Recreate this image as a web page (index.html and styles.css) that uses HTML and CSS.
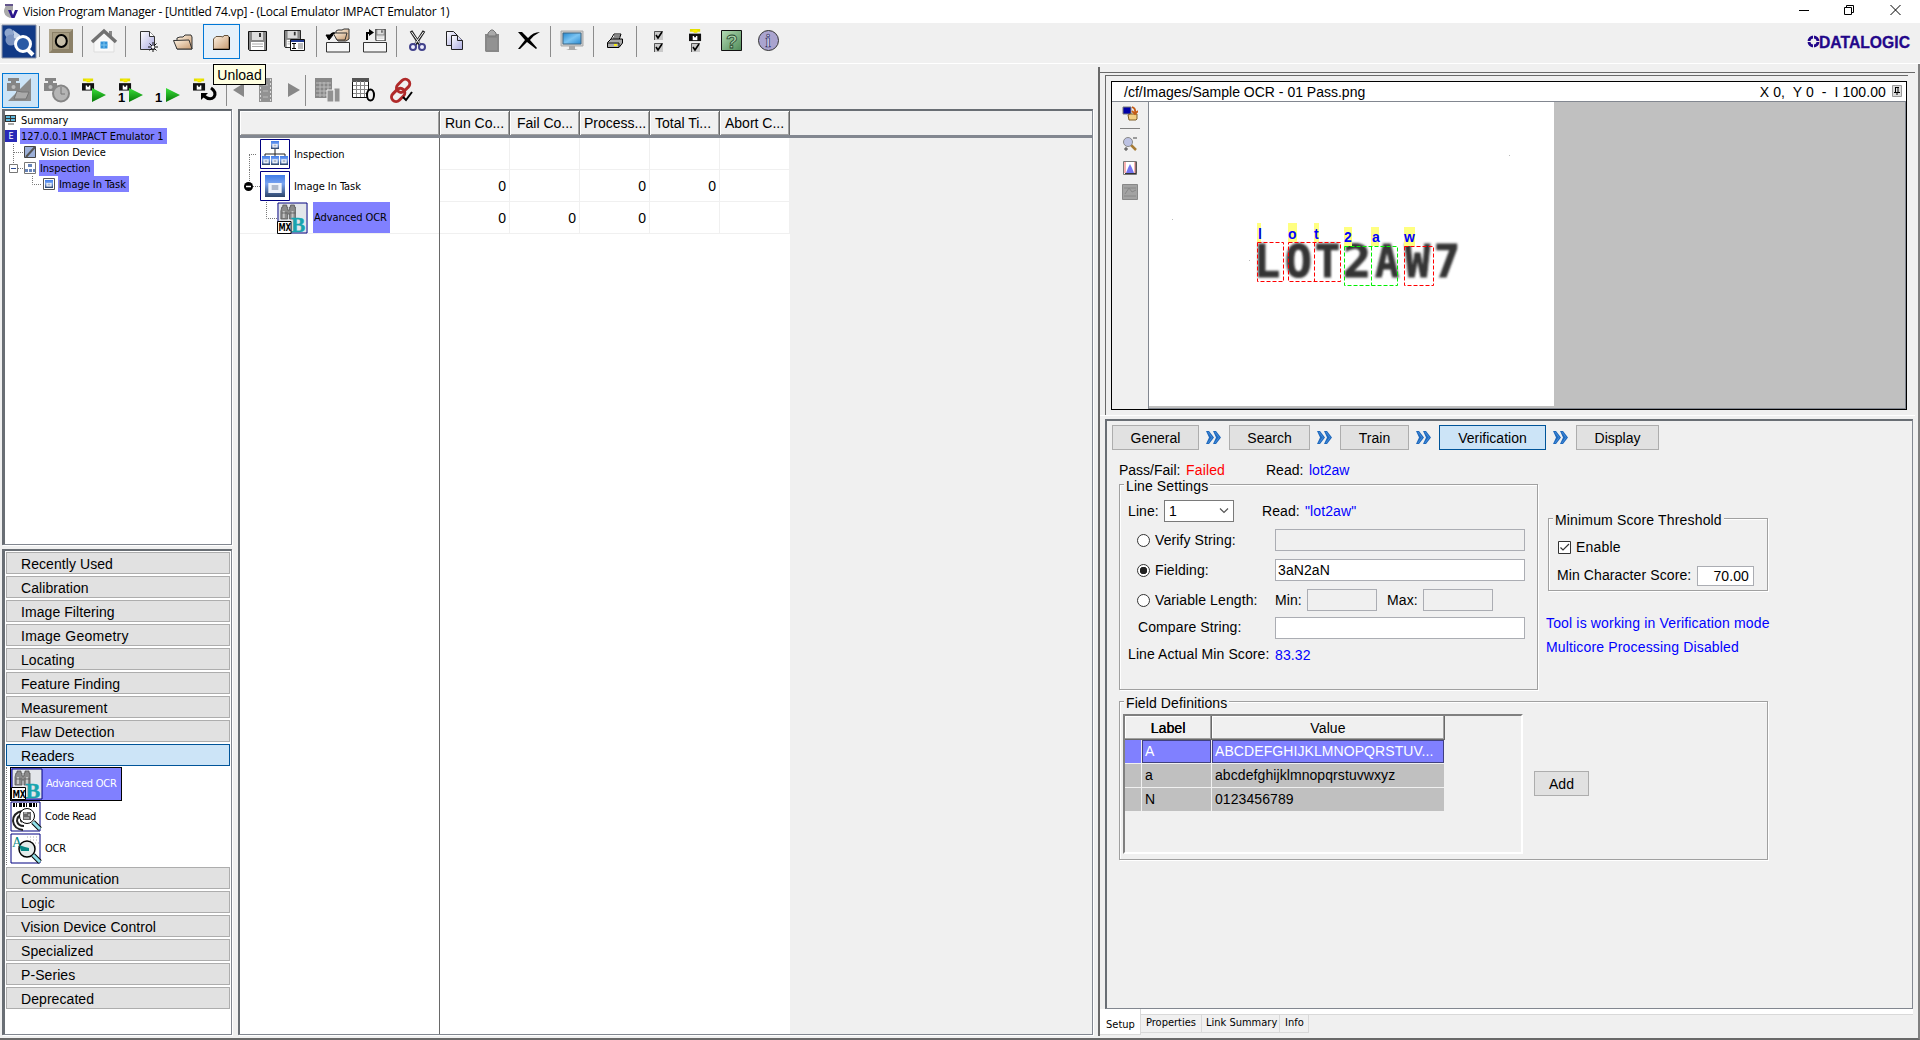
FILE: index.html
```html
<!DOCTYPE html>
<html lang="en">
<head>
<meta charset="utf-8">
<title>Vision Program Manager</title>
<link rel="stylesheet" href="styles.css">
</head>
<body>
<svg class="defs" width="0" height="0">
  <defs>
    <linearGradient id="lav" x1="0" y1="0" x2="1" y2="1"><stop offset="0" stop-color="#fff"/><stop offset="1" stop-color="#aaaae0"/></linearGradient>
    <linearGradient id="tan" x1="0" y1="0" x2="1" y2="1"><stop offset="0" stop-color="#fff4e4"/><stop offset="1" stop-color="#c79a70"/></linearGradient>
    <linearGradient id="blue" x1="0" y1="0" x2="0" y2="1"><stop offset="0" stop-color="#3f7be8"/><stop offset=".4" stop-color="#79a4f0"/><stop offset="1" stop-color="#2d4468"/></linearGradient>
    <linearGradient id="green" x1="0" y1="0" x2="0" y2="1"><stop offset="0" stop-color="#3ae03a"/><stop offset="1" stop-color="#087808"/></linearGradient>
    <linearGradient id="help" x1="0" y1="0" x2="1" y2="1"><stop offset="0" stop-color="#b5dcb5"/><stop offset="1" stop-color="#4f8a58"/></linearGradient>
    <linearGradient id="screen" x1="0" y1="0" x2="1" y2="1"><stop offset="0" stop-color="#2487cf"/><stop offset=".5" stop-color="#7cc4f2"/><stop offset="1" stop-color="#2a8ad2"/></linearGradient>
    <symbol id="floppy" viewBox="0 0 19 20"><path d="M.5 .5H18.5V19.5H1.5L.5 18.5Z" fill="#888" stroke="#111"/><path d="M4 1H15V9H4Z" fill="#ddd"/><path d="M11 2H13V6H11Z" fill="#333"/><path d="M3 11H16V19H3Z" fill="#fff"/><path d="M4 13H15M4 15.5H15" stroke="#aaa"/></symbol>
    <symbol id="camera" viewBox="0 0 14 14"><path d="M1 0H12V3H9V4H5V3H1Z" fill="#e3df00"/><path d="M4 1H9V3H4Z" fill="#fff000"/><path d="M0 5H13V13H0Z" fill="#111"/><path d="M4 7.5H9V12H4Z" fill="#fff"/><path d="M5.5 7H7.5V9H5.5Z" fill="#111"/></symbol>
    <symbol id="graycam" viewBox="0 0 14 14"><path d="M1 0H12V3H9V5H4V3H1ZM0 5H13V13H0Z" fill="#858585"/><circle cx="6.500" cy="9" r="2" fill="#bbb"/></symbol>
    <symbol id="play" viewBox="0 0 14 14"><path d="M0 0L14 7L0 14Z" fill="url(#green)"/></symbol>
    <symbol id="check" viewBox="0 0 9 9"><path d="M0 0H9V9H0Z" fill="#c9c9c9"/><path d="M.5 9V.5H9" fill="none" stroke="#555"/><path d="M2 4L4 7L8 1" fill="none" stroke="#000" stroke-width="1.600"/></symbol>
    <symbol id="window" viewBox="0 0 18 22" preserveAspectRatio="none"><path d="M0 0H18V22H0Z" fill="url(#blue)"/><path d="M3 8H15V18H3Z" fill="#eef3fb"/><path d="M6 10H12V15H6Z" fill="#aeb9cc"/></symbol>
    <symbol id="mx" viewBox="0 0 32 32" preserveAspectRatio="none">
      <path d="M1 1H31V31H1Z" fill="#e3e6ea" stroke="#000080"/>
      <path d="M5 5H6V3H10V5H11V8H13V5H14V3H18V5H19V17H13V12H11V17H4V9Z" fill="#8a8a8a" stroke="#555" stroke-width=".8"/><path d="M7 9V16M16 9V16" stroke="#c4c4c4" stroke-width="2"/><path d="M5 11H11M13 11H19" stroke="#555" stroke-width=".8"/>
      <text x="14.500" y="30" class="mx-b">B</text><path d="M.5 19.500H14.500V31.500H.5Z" fill="#fff" stroke="#000"/><text x="1.500" y="29.500" class="mx-t" textLength="13" lengthAdjust="spacingAndGlyphs">MX</text>
    </symbol>
    <symbol id="arrows" viewBox="0 0 15 13"><path d="M0 0H3L8 6.500L3 13H0L3 6.500ZM7 0H10L15 6.500L10 13H7L10 6.500Z" fill="#1f69bd"/><path d="M2 1L6 6.500L2 12M9 1L13 6.500L9 12" fill="none" stroke="#4e94df" stroke-width=".8"/></symbol>
  </defs>
</svg>

<header class="titlebar">
  <svg class="app-icon" width="16" height="16" viewBox="0 0 16 16"><path d="M4 1H11V6L9 9L11 13L8 14Q1 11 2 6Z" fill="#aaa"/><path d="M3 0H11V2H3Z" fill="#63558c"/><path d="M6 6H9L11 11L13 6H16L12.500 14H9.500Z" fill="#2b168c"/></svg>
  <h1>Vision Program Manager - [Untitled 74.vp] - (Local Emulator IMPACT Emulator 1)</h1>
  <svg class="window-controls" width="104" height="14" viewBox="0 0 104 14" fill="none" stroke="#000"><path d="M0 6.500H10M45.500 3.500H52.500V10.500H45.500ZM47.500 3.500V1.500H54.500V8.500H52.500M91.500 1L101.500 11M101.500 1L91.500 11"/></svg>
</header>

<nav class="toolbar">
  <button class="tool"><svg viewBox="0 0 37 35"><path d="M2 1H36V34H2Z" fill="#123a86" stroke="#8a93a8"/><circle cx="9" cy="9" r="4.500" fill="#8fa6cd"/><circle cx="11" cy="16" r="5.500" fill="#7b93c0"/><path d="M13 6L20 11V16L14 14Z" fill="#c6d3e8"/><circle cx="23" cy="20" r="7.500" fill="#2a5aa5" stroke="#fff" stroke-width="3"/><path d="M28 26L33 31" stroke="#fff" stroke-width="4"/></svg></button>
  <i class="sep"></i>
  <button class="tool"><svg viewBox="0 0 37 35"><path d="M6 5H30V29H6Z" fill="#8b8067"/><path d="M6 5H30L27 8H9V26L6 29Z" fill="#b0a68e"/><path d="M10 9H26V25H10Z" fill="#a79c82"/><ellipse cx="18.300" cy="17" rx="5.500" ry="6" fill="#c7bea9" stroke="#000" stroke-width="2"/></svg></button>
  <i class="sep"></i>
  <button class="tool"><svg viewBox="0 0 37 35"><path d="M8 17L18 9L28 17V28H8Z" fill="#f8f8f8" stroke="#ddd"/><path d="M23 7H26V12H23Z" fill="#888"/><path d="M6 18L18 7L30 18" fill="none" stroke="#727272" stroke-width="3.500"/><path d="M14 17H22V25H14Z" fill="#3593d8" stroke="#fff"/><path d="M18 17V25M14 21H22" stroke="#7cc5ef"/></svg></button>
  <i class="sep"></i>
  <button class="tool"><svg viewBox="0 0 37 35"><path d="M11.500 7.500H20.500L25.500 12.500V25.500H11.500Z" fill="url(#lav)" stroke="#333"/><path d="M20.500 7.500V12.500H25.500" fill="#fff" stroke="#333"/><path d="M24 18V28M19 23H29M20.500 19.500L27.500 26.500M27.500 19.500L20.500 26.500" stroke="#111"/><circle cx="24" cy="23" r="1.500" fill="#fff"/></svg></button>
  <button class="tool"><svg viewBox="0 0 37 35"><path d="M11 25V14L14 13H17L19 11H25L26 13V25Z" fill="url(#tan)" stroke="#333"/><path d="M7.500 16.500L11 25H26L23 16Z" fill="url(#tan)" stroke="#333"/></svg></button>
  <button class="tool hot"><svg viewBox="0 0 37 35"><path d="M10.500 25V15L13 12.500H18L20 13L21 11.500H25L26 13V25Z" fill="url(#tan)" stroke="#65533d"/><path d="M26.500 13V25.500H10" fill="none" stroke="#000"/></svg></button>
  <button class="tool"><svg viewBox="0 0 37 35"><use href="#floppy" x="8" y="7" width="19" height="20"/></svg></button>
  <button class="tool"><svg viewBox="0 0 37 35"><use href="#floppy" x="7" y="6" width="17" height="18"/><path d="M13.500 15.500H27.500V26.500H13.500Z" fill="#fff" stroke="#111"/><path d="M14 16H27V18H14Z" fill="#223a91"/><path d="M15 19.500H19M15 24.500H19M17 19.500V24.500" stroke="#000"/><path d="M21 19H26V25H21Z" fill="#bbb"/></svg></button>
  <i class="sep"></i>
  <button class="tool"><svg viewBox="0 0 37 35"><path d="M16 14V7L18 6H22L24 5H29V15L26 17H18Z" fill="url(#tan)" stroke="#333"/><path d="M13 9H27L25 16H17Z" fill="url(#tan)" stroke="#333"/><path d="M15 9Q10 8 10 13M6 11L9 16L13 11Z" fill="#000" stroke="#000"/><path d="M6.500 18.500H29.500V28H6.500Z" fill="#f6f6f6" stroke="#333"/></svg></button>
  <button class="tool"><svg viewBox="0 0 37 35"><use href="#floppy" x="18" y="5" width="11" height="12"/><path d="M10 16V9H13" fill="none" stroke="#000" stroke-width="2"/><path d="M12 5L17 8.500L12 12Z"/><path d="M6.500 18.500H29.500V28H6.500Z" fill="#f6f6f6" stroke="#333"/></svg></button>
  <i class="sep"></i>
  <button class="tool"><svg viewBox="0 0 37 35"><path d="M11 7L20 21M24 7L15 21" stroke="#222" stroke-width="3"/><path d="M11.500 8L20 20M23.500 8L15 20" stroke="#fff"/><g fill="#eef" stroke="#42428c" stroke-width="2"><circle cx="13" cy="23" r="3"/><circle cx="22" cy="23" r="3"/></g></svg></button>
  <button class="tool"><svg viewBox="0 0 37 35"><g fill="url(#lav)" stroke="#222"><path d="M9.500 7.500H16.500L20.500 11.500V21.500H9.500Z"/><path d="M14.500 11.500H20.500L25.500 16.500V25.500H14.500Z"/><path d="M20.500 11.500V16.500H25.500"/></g></svg></button>
  <button class="tool"><svg viewBox="0 0 37 35"><path d="M11 10H25V28H12L11 27Z" fill="#888"/><path d="M14 12V9L17 6H19L22 9V12Z" fill="#aaa" stroke="#777"/><path d="M13 14H23V26H13Z" fill="#929292"/></svg></button>
  <button class="tool"><svg viewBox="0 0 37 35"><path d="M7 8L11 8L17 14Q22 8 29 8Q23 11 19 16L26 24L25 25L16 18L9 25H7L14 16Z"/></svg></button>
  <i class="sep"></i>
  <button class="tool"><svg viewBox="0 0 37 35"><path d="M7 7H29V22H7Z" fill="#ccc" stroke="#aaa"/><path d="M9 9H27V20H9Z" fill="url(#screen)" stroke="#3f6684"/><path d="M15 22H21V25L24 26H12L15 25Z" fill="#aaa"/></svg></button>
  <i class="sep"></i>
  <button class="tool"><svg viewBox="0 0 37 35"><path d="M14 15L17 10H24L22 16" fill="#fff" stroke="#000"/><path d="M10.500 18.500L14 15H25.500V19L22 23.500H10.500Z" fill="#aaa" stroke="#000"/><path d="M11 19H22V23M17 12H23M16 14H22" fill="none" stroke="#111"/><path d="M17 20H20V22H17Z" fill="#f4ea12"/></svg></button>
  <i class="sep"></i>
  <button class="tool"><svg viewBox="0 0 37 35"><use href="#check" x="14" y="7" width="9" height="9"/><use href="#check" x="14" y="19" width="9" height="9"/></svg></button>
  <button class="tool"><svg viewBox="0 0 37 35"><use href="#camera" x="12" y="5" width="13" height="13"/><use href="#check" x="14" y="19" width="9" height="9"/></svg></button>
  <button class="tool"><svg viewBox="0 0 37 35"><path d="M7.500 6.500H27.500V26.500H7.500Z" fill="url(#help)" stroke="#111"/><text x="12" y="23.500" class="help-mark">?</text></svg></button>
  <button class="tool"><svg viewBox="0 0 37 35"><circle cx="17.500" cy="16.500" r="10" fill="#aaa4cf" stroke="#333"/><text x="14.500" y="23" class="info-mark">i</text></svg></button>
  <div class="brand"><svg width="104" height="16" viewBox="0 0 104 16"><circle cx="6.500" cy="7.500" r="4.500" fill="none" stroke="#23078a" stroke-width="3"/><path d="M6.500 1V14M0 7.500H13" stroke="#f0f0f0" stroke-width="1"/><text x="12" y="13.500" textLength="91" lengthAdjust="spacingAndGlyphs">DATALOGIC</text></svg></div>
</nav>

<main class="workspace">
  <section class="left">
    <nav class="runbar">
      <button class="tool pressed"><svg viewBox="0 0 37 35"><use href="#graycam" x="5" y="5" width="14" height="14"/><path d="M29 5V28H6Z" fill="#8b8b8b"/><path d="M12 26L15 18L20 19H27L24 26Z" fill="#aaa" stroke="#747474"/></svg></button>
      <button class="tool"><svg viewBox="0 0 37 35"><use href="#graycam" x="5" y="5" width="14" height="14"/><circle cx="22" cy="20.500" r="8" fill="#b5b5b5" stroke="#858585" stroke-width="2"/><path d="M22 14V21H26" fill="none" stroke="#777"/></svg></button>
      <button class="tool"><svg viewBox="0 0 37 35"><use href="#camera" x="6" y="5" width="13" height="14"/><use href="#play" x="16" y="15" width="14" height="14"/></svg></button>
      <button class="tool"><svg viewBox="0 0 37 35"><use href="#camera" x="6" y="5" width="13" height="14"/><text x="5" y="29" class="one">1</text><use href="#play" x="16" y="15" width="14" height="14"/></svg></button>
      <button class="tool"><svg viewBox="0 0 37 35"><text x="5" y="29" class="one">1</text><use href="#play" x="16" y="15" width="14" height="14"/></svg></button>
      <button class="tool"><svg viewBox="0 0 37 35"><use href="#camera" x="6" y="5" width="13" height="14"/><path d="M24 15Q30 19 27 24Q23 28 17 23" fill="none" stroke="#000" stroke-width="3"/><path d="M14 20H21L14 27Z"/></svg></button>
      <i class="sep"></i>
      <button class="tool step"><svg viewBox="0 0 18 35"><path d="M3 17L14 10V24Z" fill="#888"/></svg></button>
      <button class="tool"><svg viewBox="0 0 37 35"><path d="M11 5H24V29H11Z" fill="#929292"/><path d="M12.500 6V29M22.500 6V29" stroke="#ddd" stroke-dasharray="2 2"/><path d="M15 12H20M15 18H20M15 24H20" stroke="#bbb"/></svg></button>
      <button class="tool step"><svg viewBox="0 0 18 35"><path d="M3 10L15 17L3 24Z" fill="#888"/></svg></button>
      <i class="sep"></i>
      <button class="tool"><svg viewBox="0 0 37 35"><path d="M6 5H23V25H6Z" fill="#888"/><path d="M7 10H22M7 14H22M7 18H22M7 22H22M11 9V24M15 9V24M19 9V24" stroke="#bbb"/><path d="M18 17H25V29H18ZM25 15H31V29H25Z" fill="#929292" stroke="#eee"/></svg></button>
      <button class="tool"><svg viewBox="0 0 37 35"><path d="M6.500 5.500H22.500V24.500H6.500Z" fill="#fff" stroke="#111"/><path d="M6 5H23V9H6Z" fill="#555"/><path d="M7 12.500H22M7 16.500H22M7 20.500H22M10.500 8V24M14.500 8V24M18.500 8V24" stroke="#888"/><ellipse cx="24.500" cy="22" rx="3.500" ry="5.500" fill="#f0f0f0" stroke="#000" stroke-width="2"/></svg></button>
      <button class="tool"><svg viewBox="0 0 37 35"><g fill="none" stroke="#b02a2a" stroke-width="3" transform="rotate(-45 18 17)"><rect x="15" y="11" width="15" height="9" rx="4.500"/><rect x="5" y="14" width="15" height="9" rx="4.500"/></g><path d="M20 24L23 27L29 19" fill="none" stroke="#000" stroke-width="2"/></svg></button>
    </nav>
    <div class="panes">
      <div class="side">
        <div class="tree">
          <div class="tree-row"><svg width="12" height="12" viewBox="0 0 12 12"><path d="M0 1H11V8H0Z" fill="#333"/><path d="M1 2H5V4H1ZM6 2H10V4H6ZM1 5H5V7H1ZM6 5H10V7H6Z" fill="#5db8dd"/><path d="M3 10H9" stroke="#555"/></svg><span>Summary</span></div>
          <div class="tree-row"><svg width="12" height="12" viewBox="0 0 12 12"><path d="M0 0H12V12H0Z" fill="#2929b8"/><text x="3.500" y="9" class="e-mark">E</text></svg><span class="sel">127.0.0.1 IMPACT Emulator 1</span></div>
          <div class="tree-row d1"><svg width="32" height="16" viewBox="0 0 32 16"><path d="M8.500 0V16M9 8.500H18" stroke="#777" stroke-dasharray="1 1"/><path d="M19.500 2.500H30.500V13.500H19.500Z" fill="#9cb0d8" stroke="#444"/><path d="M21 13L30 3" stroke="#555" stroke-width="2"/></svg><span>Vision Device</span></div>
          <div class="tree-row d1"><svg width="32" height="16" viewBox="0 0 32 16"><path d="M8.500 0V4M13 8.500H18" stroke="#777" stroke-dasharray="1 1"/><path d="M4.500 4.500H12.500V12.500H4.500Z" fill="#fff" stroke="#777"/><path d="M6 8.500H11" stroke="#2c4a92"/><path d="M19.500 2.500H30.500V13.500H19.500Z" fill="#fff" stroke="#777"/><path d="M23 4H27V7H23ZM20 9H23V12H20ZM24 9H27V12H24ZM28 9H30V12H28Z" fill="#6885ba"/></svg><span class="sel">Inspection</span></div>
          <div class="tree-row d2"><svg width="32" height="16" viewBox="0 0 32 16"><path d="M8.500 0V8.500H18" fill="none" stroke="#777" stroke-dasharray="1 1"/><path d="M19.500 2.500H30.500V13.500H19.500Z" fill="#fff" stroke="#555"/><use href="#window" x="21" y="4" width="8" height="8"/></svg><span class="sel">Image In Task</span></div>
        </div>
        <div class="toolbox">
          <button>Recently Used</button><button>Calibration</button><button>Image Filtering</button><button class="wide">Image Geometry</button><button>Locating</button><button>Feature Finding</button><button>Measurement</button><button>Flaw Detection</button><button class="active">Readers</button>
          <div class="readers">
            <div class="reader chosen"><svg width="32" height="32"><use href="#mx" width="32" height="32"/></svg><span>Advanced OCR</span></div>
            <div class="reader"><svg width="32" height="32" viewBox="0 0 32 32"><path d="M1 1H30V30H1Z" fill="#fff" stroke="#000080"/><path d="M3 4H29" stroke="#000" stroke-width="4" stroke-dasharray="2 1 1 2 3 1"/><path d="M12 10Q3 12 3 20Q4 28 13 29M12 14Q7 15 7 20Q8 25 14 25M12 18Q10 19 12 21" fill="none" stroke="#222" stroke-width="2"/><circle cx="17" cy="15" r="7.500" fill="#fff" stroke="#000"/><path d="M13 11H21V19H13Z" fill="#666"/><path d="M14 12H17M18 14H20M14 17H19" stroke="#ddd"/><path d="M23 21L30 28" stroke="#000" stroke-width="5"/><path d="M23 21L30 28" stroke="#92e1ea" stroke-width="3"/></svg><span>Code Read</span></div>
            <div class="reader"><svg width="32" height="32" viewBox="0 0 32 32"><path d="M1 1H30V30H1Z" fill="#fff" stroke="#000080"/><path d="M17 4H29M20 7H29M25 10H29" stroke="#aaa" stroke-dasharray="1 2"/><text x="2" y="14" class="ocr-a">A</text><circle cx="17" cy="16" r="8" fill="#e5eceb" stroke="#000" stroke-width="1.500"/><path d="M9 12L15 14L19 15V18H11Z" fill="#078785"/><path d="M23 22L30 29" stroke="#000" stroke-width="5"/><path d="M23 22L30 29" stroke="#92e1ea" stroke-width="3"/></svg><span>OCR</span></div>
          </div>
          <button>Communication</button><button>Logic</button><button>Vision Device Control</button><button>Specialized</button><button>P-Series</button><button>Deprecated</button>
        </div>
      </div>
      <div class="program">
        <div class="grid-head"><b></b><b>Run Co...</b><b>Fail Co...</b><b>Process...</b><b>Total Ti...</b><b>Abort C...</b></div>
        <div class="grid-body">
          <div class="names">
            <div class="name"><svg width="51" height="32" viewBox="0 0 51 32"><path d="M9 16.500H17M9.500 17V32" stroke="#777" stroke-dasharray="1 1"/><path d="M20.500 1.500H49.500V30.500H20.500Z" fill="#fff" stroke="#000080"/><path d="M35 10V16M25 19V16H45V19M35 16V19" fill="none" stroke="#222"/><g><use href="#window" x="31" y="3" width="8" height="8"/><use href="#window" x="22" y="18" width="8" height="9"/><use href="#window" x="31" y="18" width="8" height="9"/><use href="#window" x="40" y="18" width="8" height="9"/></g></svg><span>Inspection</span></div>
            <div class="name"><svg width="51" height="32" viewBox="0 0 51 32"><path d="M9.500 0V12M13 16.500H20" stroke="#777" stroke-dasharray="1 1"/><circle cx="8.500" cy="16.500" r="4.500"/><path d="M6 16.500H11" stroke="#fff" stroke-width="1.500"/><path d="M20.500 1.500H49.500V30.500H20.500Z" fill="#fff" stroke="#000080"/><use href="#window" x="25" y="5" width="20" height="22"/></svg><span>Image In Task</span></div>
            <div class="name deep"><svg width="70" height="32" viewBox="0 0 70 32"><path d="M26.500 0V16.500H37" fill="none" stroke="#777" stroke-dasharray="1 1"/><use href="#mx" x="37" y="0" width="31" height="32"/></svg><span class="sel">Advanced OCR</span></div>
          </div>
          <div class="counts">
            <div><i></i><i></i><i></i><i></i><i></i></div>
            <div><i>0</i><i></i><i>0</i><i>0</i><i></i></div>
            <div><i>0</i><i>0</i><i>0</i><i></i><i></i></div>
          </div>
        </div>
      </div>
    </div>
  </section>

  <section class="right">
    <div class="viewer-wrap">
      <div class="viewer">
        <div class="viewer-title"><span>/cf/Images/Sample OCR - 01 Pass.png</span><span class="coords">X 0,&nbsp; Y 0&nbsp; -&nbsp; I 100.00</span><svg width="10" height="12" viewBox="0 0 10 12"><path d="M.5 .5H9.500V11.500H.5Z" fill="#ddd" stroke="#999"/><path d="M3.500 2V7M6 2V7M3 2.500H7M2 7.500H8M5 7V10" stroke="#000"/></svg></div>
        <div class="viewer-body">
          <div class="viewer-tools">
            <svg width="16" height="16" viewBox="0 0 16 16"><path d="M1 1H9V8H1Z" fill="#0000a8" stroke="#777"/><path d="M6 9L8 8H15V13L14 14H7Z" fill="#f2cf83" stroke="#7e5d25"/><path d="M10 1Q14 2 13 7M10 5L13 8L16 5" fill="none" stroke="#c55c16" stroke-width="1.800"/></svg>
            <hr>
            <svg width="16" height="16" viewBox="0 0 16 16"><path d="M9 9L14 14" stroke="#a77b34" stroke-width="2.500"/><circle cx="6" cy="6" r="4.500" fill="#bcc2e3" stroke="#888"/><path d="M11 2H15M2 13H6M4 11V15" stroke="#444"/></svg>
            <svg width="16" height="16" viewBox="0 0 16 16"><path d="M1.500 1.500H14.500V14.500H1.500Z" fill="#fff" stroke="#777"/><path d="M3 2V13M13 2V13" stroke="#f16565"/><path d="M4 13L6 8L8 4L10 8L12 13Z" fill="#7474ef"/><path d="M3 13.500H14V2" fill="none" stroke="#333"/></svg>
            <svg width="16" height="16" viewBox="0 0 16 16"><path d="M.5 .5H15.500V15.500H.5Z" fill="#a3a3a3" stroke="#888"/><path d="M2 4H14M2 12H14M3 10L7 4L10 8L14 6" fill="none" stroke="#888"/></svg>
          </div>
          <svg class="scene" width="757" height="307" viewBox="1149 102 757 307">
            <defs><filter id="soft" x="-20%" y="-20%" width="140%" height="140%"><feGaussianBlur stdDeviation="1"/></filter></defs>
            <path d="M1149 102H1554V406H1149Z" fill="#fff"/>
            <g class="print" filter="url(#soft)"><text x="1254" y="277" textLength="26" lengthAdjust="spacingAndGlyphs">L</text><text x="1285" y="277" textLength="27" lengthAdjust="spacingAndGlyphs">O</text><text x="1315" y="277" textLength="25" lengthAdjust="spacingAndGlyphs">T</text><text x="1343" y="277" textLength="28" lengthAdjust="spacingAndGlyphs">2</text><text x="1375" y="277" textLength="24" lengthAdjust="spacingAndGlyphs">A</text><text x="1405" y="277" textLength="25" lengthAdjust="spacingAndGlyphs">W</text><text x="1434" y="277" textLength="26" lengthAdjust="spacingAndGlyphs">7</text></g>
            <path d="M1257 223H1261V242H1257ZM1288 223H1297V242H1288ZM1314 223H1319V242H1314ZM1344 227H1352V246H1344ZM1371 227H1379V246H1371ZM1404 227H1415V246H1404Z" fill="#ffff80"/>
            <g class="marks"><text x="1258" y="239">l</text><text x="1288" y="239">o</text><text x="1314" y="239">t</text><text x="1344" y="242">2</text><text x="1372" y="242">a</text><text x="1404" y="242">w</text></g>
            <g fill="none" stroke="#f00" stroke-dasharray="4 2"><path d="M1257.500 242.500H1283.500V281.500H1257.500ZM1288.500 242.500H1340.500V281.500H1288.500ZM1314.500 242.500V281.500M1404.500 246.500H1433.500V285.500H1404.500Z"/><path stroke="#0e0" d="M1344.500 246.500H1397.500V285.500H1344.500ZM1371.500 246.500V285.500"/></g>
            <path d="M1172 219h1v1h-1zM1249 260h1v1h-1zM1509 155h1v1h-1z" fill="#bbb"/>
          </svg>
        </div>
      </div>
    </div>
    <div class="editor">
      <div class="steps"><button>General</button><svg width="15" height="13"><use href="#arrows"/></svg><button>Search</button><svg width="15" height="13"><use href="#arrows"/></svg><button>Train</button><svg width="15" height="13"><use href="#arrows"/></svg><button class="active">Verification</button><svg width="15" height="13"><use href="#arrows"/></svg><button>Display</button></div>
      <div class="status"><span class="c1">Pass/Fail:</span><span class="fail c2">Failed</span><span class="c3">Read:</span><span class="val">lot2aw</span></div>
      <div class="columns">
        <div class="group lines">
          <span class="legend">Line Settings</span>
          <div class="row line-row"><label>Line:</label><div class="combo">1<svg width="10" height="6" viewBox="0 0 10 6"><path d="M1 .5L5 4.500L9 .5" fill="none" stroke="#555" stroke-width="1.200"/></svg></div><label class="read">Read:</label><span class="val">"lot2aw"</span></div>
          <div class="row"><label class="lab"><i class="radio"></i>Verify String:</label><div class="field off"></div></div>
          <div class="row"><label class="lab"><i class="radio on"></i>Fielding:</label><div class="field">3aN2aN</div></div>
          <div class="row"><label class="lab"><i class="radio"></i>Variable Length:</label><span class="min">Min:</span><div class="field off small"></div><span class="max">Max:</span><div class="field off small"></div></div>
          <div class="row compare"><label class="lab">Compare String:</label><div class="field"></div></div>
          <div class="row actual"><label class="lab">Line Actual Min Score:</label><span class="val">83.32</span></div>
        </div>
        <div class="aside">
          <div class="group score">
            <span class="legend">Minimum Score Threshold</span>
            <div class="enable"><svg width="13" height="13" viewBox="0 0 13 13"><path d="M.5 .5H12.500V12.500H.5Z" fill="#fff" stroke="#333"/><path d="M2.500 6.500L5 9L11 3" fill="none" stroke="#333" stroke-width="1.200"/></svg><span>Enable</span></div>
            <div class="min-score"><span>Min Character Score:</span><div class="field">70.00</div></div>
          </div>
          <p>Tool is working in Verification mode</p>
          <p>Multicore Processing Disabled</p>
        </div>
      </div>
      <div class="group defs-group">
        <span class="legend">Field Definitions</span>
        <div class="def-table">
          <div class="def-head"><b>Label</b><b>Value</b></div>
          <div class="def-row picked"><i></i><span>A</span><span>ABCDEFGHIJKLMNOPQRSTUV...</span></div>
          <div class="def-row"><i></i><span>a</span><span>abcdefghijklmnopqrstuvwxyz</span></div>
          <div class="def-row"><i></i><span>N</span><span>0123456789</span></div>
        </div>
        <button class="add">Add</button>
      </div>
    </div>
    <div class="tabs"><span class="current">Setup</span><span>Properties</span><span>Link Summary</span><span>Info</span></div>
  </section>
</main>
<div class="tooltip">Unload</div>
</body>
</html>
```

FILE: styles.css
```css
* { box-sizing: border-box; }
html, body { margin: 0; height: 1040px; overflow: hidden; }
body {
  width: 1920px;
  display: flex;
  flex-direction: column;
  position: relative;
  background: #f0f0f0;
  color: #000;
  font: 14px/16px "Liberation Sans", Arial, sans-serif;
}
button { font: inherit; color: inherit; padding: 0; margin: 0; border: 0; background: none; border-radius: 0; }
svg { display: block; flex: none; }
i, b { font-style: normal; font-weight: normal; }
.defs { position: absolute; }

/* Title bar */
.titlebar { height: 23px; flex: none; display: flex; align-items: center; background: #fff; padding: 0 20px 0 2px; }
.titlebar h1 { flex: 1; margin: 0 0 0 5px; padding-top: 1px; font: 12px/16px "Open Sans", "Noto Sans", sans-serif; letter-spacing: -.24px; white-space: nowrap; }
.titlebar .window-controls { margin-right: -3px; margin-bottom: 1px; }

/* Toolbars */
.toolbar { height: 41px; flex: none; display: flex; align-items: flex-start; padding-top: 1px; border-bottom: 1px solid #fff; }
.tool { width: 37px; height: 35px; flex: none; }
.tool svg { width: 100%; height: 35px; }
.tool.step { width: 18px; }
.hot { background: #e5f1fb; box-shadow: inset 0 0 0 1px #0078d7; }
.pressed { background: #cce4f7; box-shadow: inset 0 0 0 1px #0078d7; }
.sep { width: 6px; height: 31px; flex: none; margin-top: 2px; border-left: 2px solid transparent; background: linear-gradient(#8c8c8c, #8c8c8c) 0 0 / 1px 31px no-repeat padding-box; }
.brand { margin: 10px 9px 0 auto; }
.brand text { font: bold 16.5px "Liberation Sans", sans-serif; fill: #23078a; stroke: #23078a; stroke-width: .3px; }
.help-mark { font: bold 19px "Liberation Sans", sans-serif; fill: #a9d5ac; stroke: #26452c; stroke-width: .8px; }
.info-mark { font: bold 18px "Liberation Serif", serif; fill: #d3d0ec; stroke: #2c2b5c; stroke-width: .7px; }
.one { font: bold 13px "Liberation Sans", sans-serif; }
.runbar { height: 45px; display: flex; padding: 9px 0 0 2px; }
.runbar .sep { width: 6px; }
.tooltip { position: absolute; left: 213px; top: 64px; width: 53px; height: 21px; border: 1px solid #000; background: #ffffe1; line-height: 20px; text-align: center; }

/* Main split */
.workspace { flex: 1; min-height: 0; display: flex; border-bottom: 2px solid #696969; border-right: 2px solid #808080; }
.left { width: 1094px; flex: none; display: flex; flex-direction: column; }
.panes { flex: 1; min-height: 0; display: flex; gap: 6px; padding: 0 0 3px 2px; }
.side { width: 230px; flex: none; display: flex; flex-direction: column; gap: 4px; }
.tree, .toolbox, .program { background: #fff; border: 1px solid #828790; border-top: 2px solid #696e74; border-left: 3px solid #696e74; box-shadow: 1px 1px #fff; }
.tree { height: 436px; }
.tree, .name, .reader, .tabs { font: 11px/16px "DejaVu Sans Condensed", "Noto Sans", sans-serif; letter-spacing: -.06px; }
.tree { padding-top: 1px; }
.tree-row { display: flex; align-items: center; height: 16px; gap: 3px; }
.tree-row span { height: 16px; padding: 0 3px 0 1px; line-height: 17px; white-space: nowrap; }
.d1 { gap: 2px; }
.d2 { gap: 2px; padding-left: 19px; }
.sel { background: #8080ff; }
.e-mark { font: 8px "DejaVu Sans", sans-serif; fill: #fff; }
.toolbox { flex: 1; display: flex; flex-direction: column; gap: 2px; padding: 1px 1px 0 1px; }
.toolbox button { height: 22px; flex: none; border: 1px solid #adadad; background: #e1e1e1; text-align: left; padding: 1px 0 0 14px; letter-spacing: .07px; }
.toolbox .wide { letter-spacing: .25px; }
.toolbox .active { background: #cce4f7; border-color: #005499; }
.readers { height: 98px; margin-top: -1px; padding-left: 3px; border-left: 1px dotted #777; display: flex; flex-direction: column; }
.reader { display: flex; align-items: center; gap: 3px; height: 32px; flex: none; letter-spacing: -.25px; align-self: flex-start; }
.reader.chosen { background: #8080ff; color: #fff; border: 1px solid #000; height: 34px; padding-right: 4px; }
.mx-b { font: bold 22px "Liberation Serif", serif; fill: #18a4ae; stroke: #18a4ae; stroke-width: .4px; }
.mx-t { font: bold 11px "DejaVu Sans", sans-serif; }
.ocr-a { font: 14px "Liberation Serif", serif; fill: #078785; }

/* Program grid */
.program { width: 855px; display: flex; flex-direction: column; border-left-width: 2px; background: #f0f0f0; }
.grid-head { display: grid; grid-template-columns: 200px repeat(5, 70px); height: 27px; flex: none; border-bottom: 3px solid #828790; }
.grid-head b { border-right: 1px solid #696969; padding: 4px 0 0 5px; box-shadow: inset 1px 1px #fff, inset -1px -1px #a0a0a0; white-space: nowrap; }
.grid-head b:nth-child(3) { padding-left: 7px; }
.grid-head b:nth-child(4) { padding-left: 4px; }
.grid-body { flex: 1; display: flex; }
.names { width: 200px; background: #fff; border-right: 1px solid #696969; }
.name { height: 32px; display: flex; align-items: center; gap: 3px; white-space: nowrap; line-height: 17px; }
.name.deep { border-bottom: 1px solid #f0f0f0; gap: 3px; }
.name .sel { height: 31px; line-height: 31px; padding: 0 3px 0 1px; }
.counts { width: 350px; background: #fff; }
.counts div { display: grid; grid-template-columns: repeat(5, 70px); height: 32px; }
.counts i { border-right: 1px solid #f0f0f0; border-bottom: 1px solid #f0f0f0; text-align: right; padding: 8px 3px 0 0; }

/* Right side */
.right { flex: 1; min-width: 0; margin: 3px 0 2px 4px; border-left: 2px solid #696969; display: flex; flex-direction: column; background: #f0f0f0; }
.viewer-wrap { height: 344px; flex: none; margin: 5px 3px 0 0; padding: 8px 5px 0 10px; border-top: 1px solid #696969; background: linear-gradient(#696969, #696969) 5px 2px / 803px 1px no-repeat, linear-gradient(#696969, #696969) 5px 2px / 1px 340px no-repeat; border-bottom: 1px solid #fff; }
.viewer { width: 796px; height: 329px; margin-left: 1px; border: 1px solid #000; background: #fff; }
.viewer-title { height: 20px; display: flex; align-items: center; padding: 0 4px 0 12px; border-bottom: 1px solid #828790; }
.coords { margin-left: auto; margin-right: 6px; letter-spacing: .1px; }
.viewer-title svg { margin-top: -2px; }
.viewer-body { display: flex; height: 307px; }
.viewer-tools { width: 37px; border-right: 1px solid #828790; background: #f0f0f0; padding: 4px 0 0 10px; display: flex; flex-direction: column; }
.viewer-tools hr { width: 20px; margin: 6px 0 7px -2px; border: 0; border-top: 1px solid #808080; flex: none; }
.viewer-tools svg { margin-bottom: 8px; }
.viewer-tools svg:first-child { margin-bottom: 0; }
.scene { background: #c0c0c0; box-shadow: inset -1px -1px #828790; }
.print text { font: bold 44px "DejaVu Sans Mono", monospace; fill: #353535; stroke: #353535; stroke-width: 1px; }
.marks text { font: bold 14px "Liberation Sans", sans-serif; fill: #00f; }

.editor { margin: 3px 5px 0 5px; height: 590px; flex: none; border: 1px solid #828790; border-top: 2px solid #696e74; border-left: 2px solid #696e74; padding: 4px 0 0 5px; letter-spacing: .1px; }
.steps { display: flex; align-items: center; height: 25px; }
.steps button, .add { height: 25px; border: 1px solid #adadad; background: #e1e1e1; padding-bottom: 0; }
.steps svg { margin: 0 8px 0 7px; }
.steps button:nth-of-type(1) { width: 87px; }
.steps button:nth-of-type(2) { width: 81px; }
.steps button:nth-of-type(3) { width: 69px; }
.steps button:nth-of-type(4) { width: 107px; background: #cce4f7; border-color: #005499; }
.steps button:nth-of-type(5) { width: 83px; }
.status { display: flex; padding: 12px 0 0 7px; height: 34px; letter-spacing: 0; }
.c1 { width: 67px; }
.c2 { width: 80px; letter-spacing: .15px; }
.c3 { width: 43px; }
.fail { color: #f00; }
.val { color: #00f; }
.columns { display: flex; padding-left: 7px; gap: 10px; }
.group { position: relative; border: 1px solid #a0a0a0; box-shadow: 1px 1px #fff, inset 1px 1px #fff; }
.legend { position: absolute; left: 4px; top: -7px; padding: 0 2px; background: #f0f0f0; white-space: nowrap; }
.lines { width: 419px; height: 206px; padding: 15px 0 0 8px; }
.row { display: flex; align-items: center; height: 22px; margin-bottom: 8px; white-space: nowrap; }
.line-row { margin-bottom: 7px; }
.line-row label:first-child { width: 36px; }
.combo { width: 70px; height: 22px; border: 1px solid #7a7a7a; background: #fff; padding: 3px 4px; display: flex; justify-content: space-between; align-items: center; }
.read { margin-left: 28px; width: 43px; }
.lab { width: 147px; display: flex; align-items: center; gap: 5px; padding-left: 9px; }
.radio { width: 13px; height: 13px; border: 1px solid #333; border-radius: 50%; background: #fff; }
.radio.on { background: radial-gradient(circle, #222 0 3.5px, #fff 4px); }
.field { width: 250px; height: 22px; border: 1px solid #abadb3; background: #fff; padding: 2px; }
.off { background: #f0f0f0; }
.small { width: 70px; }
.min { width: 32px; }
.max { width: 36px; margin-left: 10px; }
.compare { margin: -2px 0 5px; }
.compare .lab { padding: 0 0 2px 10px; }
.actual .lab { padding: 0 0 3px; }
.actual .val { padding-bottom: 1px; }
.aside { width: 230px; padding-top: 34px; }
.score { width: 220px; height: 73px; padding: 21px 0 0 9px; }
.enable { display: flex; align-items: center; height: 14px; gap: 5px; letter-spacing: .2px; }
.min-score { display: flex; align-items: center; justify-content: space-between; margin: 12px 13px 0 -1px; }
.min-score span { padding-bottom: 2px; }
.min-score .field { width: 57px; height: 20px; text-align: right; padding: 1px 4px 0; }
.aside .legend, .aside p { letter-spacing: .16px; }
.aside p { margin: 0 0 8px -2px; color: #00f; white-space: nowrap; }
.score + p { margin-top: 24px; }
.defs-group { width: 649px; height: 159px; margin: 11px 0 0 7px; padding: 12px 0 0 3px; display: flex; gap: 11px; }
.def-table { width: 400px; height: 140px; border: 2px solid #fff; border-top-color: #808080; border-left-color: #808080; }
.def-head { display: grid; grid-template-columns: 87px 233px; height: 24px; }
.def-head b { text-align: center; border-right: 1px solid #696969; border-bottom: 1px solid #696969; padding-top: 4px; box-shadow: inset -1px -1px #a0a0a0, inset 1px 1px #fff; }
.def-head b:first-child { text-shadow: .3px 0 #000; }
.def-row { display: grid; grid-template-columns: 16px 69px 232px; gap: 1px; height: 24px; width: 320px; padding-bottom: 1px; letter-spacing: .08px; }
.def-row i, .def-row span { background: #c0c0c0; }
.def-row span { padding: 3px 0 0 3px; white-space: nowrap; }
.picked i, .picked span { background: #8080ff; color: #fff; }
.picked span { box-shadow: inset 0 0 0 1px #404080; }
.add { width: 55px; margin-top: 57px; }
.tabs { height: 28px; display: flex; align-items: flex-start; background: linear-gradient(#fff 5px, #d9d9d9 5px 6px, #f0f0f0 6px); margin-right: 5px; letter-spacing: 0; }
.tabs span { height: 19px; margin-top: 5px; padding: 0 4px; border: 1px solid #d9d9d9; border-left: 0; width: 78px; white-space: nowrap; background: #f0f0f0; }
.tabs span:nth-child(2) { width: 61px; padding-left: 5px; }
.tabs span:nth-child(4) { width: 29px; padding-left: 5px; }
.tabs .current { width: 41px; height: 26px; margin-top: 0; padding: 8px 4px 0 6px; border-top: 0; background: #fff; }
```
